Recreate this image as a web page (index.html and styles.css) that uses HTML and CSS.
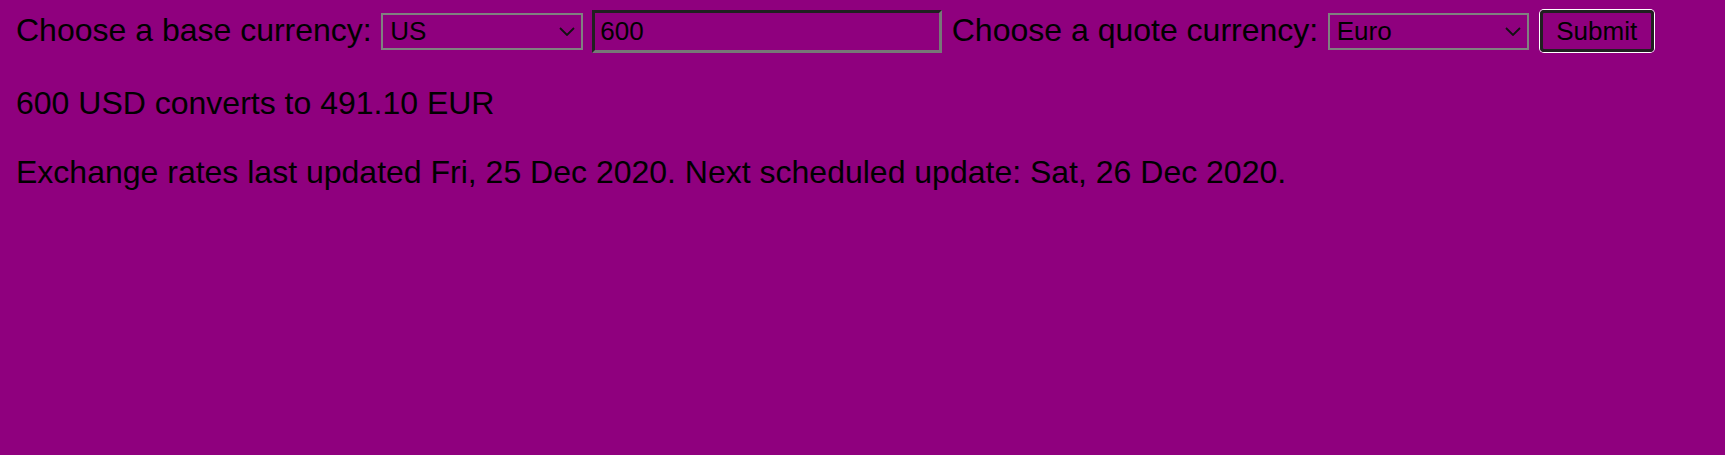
FILE: index.html
```html
<!DOCTYPE html>
<html lang="en">
<head>
<meta charset="utf-8">
<title>Currency converter</title>
<link rel="stylesheet" href="styles.css">
</head>
<body>
<div class="page">
  <form class="converter">
    <label class="label" for="base">Choose a base currency:</label>
    <span class="select-wrap">
      <select id="base" class="select"><option>US</option></select>
      <svg class="chevron" width="16" height="9" viewBox="0 0 16 9"><path d="M1 1 L8 8 L15 1" fill="none" stroke="#111" stroke-width="1.8"/></svg>
    </span>
    <input class="amount" type="text" value="600">
    <label class="label" for="quote">Choose a quote currency:</label>
    <span class="select-wrap">
      <select id="quote" class="select"><option>Euro</option></select>
      <svg class="chevron" width="16" height="9" viewBox="0 0 16 9"><path d="M1 1 L8 8 L15 1" fill="none" stroke="#111" stroke-width="1.8"/></svg>
    </span>
    <button class="submit" type="submit">Submit</button>
  </form>
  <p class="line">600 USD converts to 491.10 EUR</p>
  <p class="line">Exchange rates last updated Fri, 25 Dec 2020. Next scheduled update: Sat, 26 Dec 2020.</p>
</div>
</body>
</html>
```
FILE: styles.css
```css
html, body {
  margin: 0;
  padding: 0;
}

body {
  background: #8f007e;
  color: #000;
  font-family: "Liberation Sans", Arial, sans-serif;
  font-size: 32px;
}

.page {
  padding: 9px 15px 0 16px;
}

.converter {
  display: flex;
  align-items: center;
  gap: 9.5px;
  height: 44px;
  margin: 0;
}

.label {
  line-height: normal;
  white-space: nowrap;
  margin-bottom: 2px;
}

.select-wrap {
  position: relative;
  display: block;
}

.select {
  appearance: none;
  -webkit-appearance: none;
  box-sizing: border-box;
  width: 201.5px;
  height: 37px;
  margin: 0;
  padding: 0 30px 0 7px;
  border: 2px solid #808080;
  border-radius: 0;
  background: transparent;
  color: #000;
  font-family: "Liberation Sans", Arial, sans-serif;
  font-size: 26px;
  display: block;
}

.chevron {
  position: absolute;
  right: 8px;
  top: 14px;
  pointer-events: none;
}

.amount {
  box-sizing: border-box;
  width: 350px;
  height: 43px;
  margin: 0;
  padding: 0 4px 0 5px;
  border-style: solid;
  border-width: 3px;
  border-color: #202020 #777 #777 #202020;
  background: transparent;
  color: #000;
  font-family: "Liberation Sans", Arial, sans-serif;
  font-size: 26px;
  outline: none;
}

.submit {
  box-sizing: border-box;
  width: 114px;
  height: 42px;
  margin: 0 0 0 1px;
  padding: 0;
  border: 3px solid #202020;
  border-radius: 4px;
  box-shadow: 0 0 0 1px #fff;
  background: transparent;
  color: #000;
  font-family: "Liberation Sans", Arial, sans-serif;
  font-size: 26px;
}

.line {
  margin: 32px 0;
  line-height: normal;
}
```
